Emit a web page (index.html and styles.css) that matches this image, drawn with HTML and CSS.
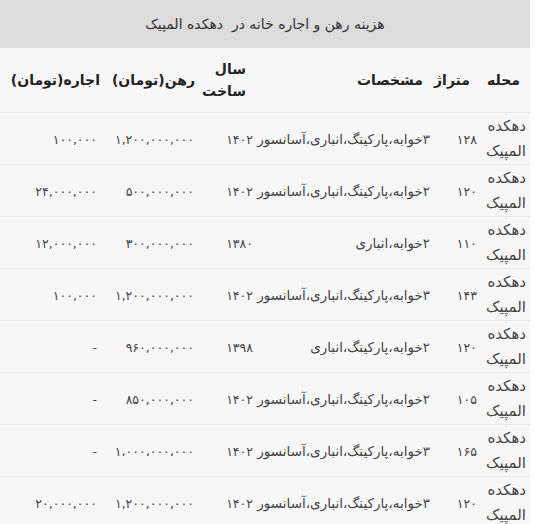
FILE: index.html
```html
<!DOCTYPE html>
<html lang="fa" dir="rtl">
<head>
<meta charset="utf-8">
<link rel="stylesheet" href="styles.css">
</head>
<body>
<div class="wrap">
  <div class="title">هزینه رهن و اجاره خانه در&nbsp; دهکده المپیک</div>
  <table class="price-table">
    <colgroup>
      <col class="c-area">
      <col class="c-size">
      <col class="c-desc">
      <col class="c-year">
      <col class="c-rent">
      <col class="c-lease">
    </colgroup>
    <thead>
      <tr>
        <th class="h-area">محله</th>
        <th class="h-size">متراژ</th>
        <th class="h-desc">مشخصات</th>
        <th class="h-year">سال ساخت</th>
        <th class="h-rent">رهن(تومان)</th>
        <th class="h-lease">اجاره(تومان)</th>
      </tr>
    </thead>
    <tbody>
      <tr><td class="area">دهکده المپیک</td><td class="num">۱۲۸</td><td class="desc">۳خوابه،پارکینگ،انباری،آسانسور</td><td class="num">۱۴۰۲</td><td class="num">۱,۲۰۰,۰۰۰,۰۰۰</td><td class="num">۱۰۰,۰۰۰</td></tr>
      <tr><td class="area">دهکده المپیک</td><td class="num">۱۲۰</td><td class="desc">۲خوابه،پارکینگ،انباری،آسانسور</td><td class="num">۱۴۰۲</td><td class="num">۵۰۰,۰۰۰,۰۰۰</td><td class="num">۲۴,۰۰۰,۰۰۰</td></tr>
      <tr><td class="area">دهکده المپیک</td><td class="num">۱۱۰</td><td class="desc">۲خوابه،انباری</td><td class="num">۱۳۸۰</td><td class="num">۳۰۰,۰۰۰,۰۰۰</td><td class="num">۱۲,۰۰۰,۰۰۰</td></tr>
      <tr><td class="area">دهکده المپیک</td><td class="num">۱۴۳</td><td class="desc">۳خوابه،پارکینگ،انباری،آسانسور</td><td class="num">۱۴۰۲</td><td class="num">۱,۲۰۰,۰۰۰,۰۰۰</td><td class="num">۱۰۰,۰۰۰</td></tr>
      <tr><td class="area">دهکده المپیک</td><td class="num">۱۲۰</td><td class="desc">۲خوابه،پارکینگ،انباری</td><td class="num">۱۳۹۸</td><td class="num">۹۶۰,۰۰۰,۰۰۰</td><td class="num">-</td></tr>
      <tr><td class="area">دهکده المپیک</td><td class="num">۱۰۵</td><td class="desc">۲خوابه،پارکینگ،انباری،آسانسور</td><td class="num">۱۴۰۲</td><td class="num">۸۵۰,۰۰۰,۰۰۰</td><td class="num">-</td></tr>
      <tr><td class="area">دهکده المپیک</td><td class="num">۱۶۵</td><td class="desc">۳خوابه،پارکینگ،انباری،آسانسور</td><td class="num">۱۴۰۲</td><td class="num">۱،۰۰۰،۰۰۰،۰۰۰</td><td class="num">-</td></tr>
      <tr><td class="area">دهکده المپیک</td><td class="num">۱۲۰</td><td class="desc">۳خوابه،پارکینگ،انباری،آسانسور</td><td class="num">۱۴۰۲</td><td class="num">۱,۲۰۰,۰۰۰,۰۰۰</td><td class="num">۲۰,۰۰۰,۰۰۰</td></tr>
    </tbody>
  </table>
</div>
</body>
</html>
```

FILE: styles.css
```css
html, body {
  margin: 0;
  padding: 0;
  background: #ffffff;
}

body {
  font-family: "DejaVu Sans", sans-serif;
  font-size: 14px;
  color: #444444;
}

.wrap {
  width: 530px;
  margin-right: 12px;
}

.title {
  height: 48px;
  line-height: 48px;
  background: #dcdcdc;
  color: #333333;
  text-align: center;
  font-size: 14px;
}

.price-table {
  width: 530px;
  border-collapse: collapse;
  table-layout: fixed;
  background: #f7f7f7;
}

.c-area { width: 50px; }
.c-size { width: 47px; }
.c-desc { width: 177px; }
.c-year { width: 59px; }
.c-rent { width: 97px; }
.c-lease { width: 100px; }

.price-table th {
  font-weight: bold;
  font-size: 14px;
  color: #222222;
  text-align: right;
  vertical-align: middle;
  line-height: 22px;
  padding: 10px 10px 10px 0;
  height: 44px;
}

.price-table th.h-rent { padding-right: 2px; }
.price-table th.h-lease { padding-right: 0; }

.price-table td {
  text-align: right;
  vertical-align: middle;
  line-height: 25px;
  padding: 1px 3px 0 0;
  border-top: 1px solid #e6e6e6;
  white-space: normal;
}

.price-table td.area {
  font-size: 15px;
  padding-right: 4px;
}

.price-table td.desc {
  font-size: 13.5px;
}

.price-table td.num {
  font-size: 12.5px;
}
```
